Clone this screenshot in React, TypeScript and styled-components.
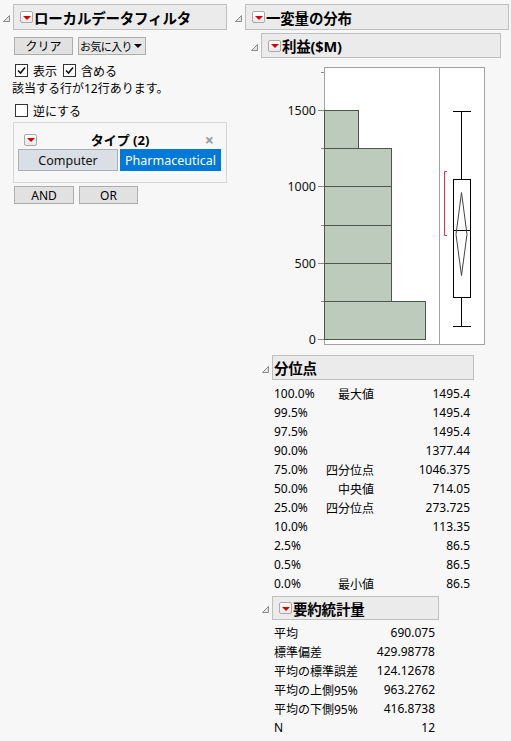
import styled, { createGlobalStyle } from "styled-components";

const GlobalStyle = createGlobalStyle`
  body {
    margin: 0;
    background: #f7f7f7;
    font-family: "Noto Sans", "Noto Sans CJK JP", sans-serif;
    font-size: 12px;
    color: #000;
  }
`;

const quantiles = [
  ["100.0%", "最大値", "1495.4"],
  ["99.5%", "", "1495.4"],
  ["97.5%", "", "1495.4"],
  ["90.0%", "", "1377.44"],
  ["75.0%", "四分位点", "1046.375"],
  ["50.0%", "中央値", "714.05"],
  ["25.0%", "四分位点", "273.725"],
  ["10.0%", "", "113.35"],
  ["2.5%", "", "86.5"],
  ["0.5%", "", "86.5"],
  ["0.0%", "最小値", "86.5"],
];

const summary = [
  ["平均", "690.075"],
  ["標準偏差", "429.98778"],
  ["平均の標準誤差", "124.12678"],
  ["平均の上側95%", "963.2762"],
  ["平均の下側95%", "416.8738"],
  ["N", "12"],
];

const bins = [
  { lo: 0, hi: 250, n: 3 },
  { lo: 250, hi: 500, n: 2 },
  { lo: 500, hi: 750, n: 2 },
  { lo: 750, hi: 1000, n: 2 },
  { lo: 1000, hi: 1250, n: 2 },
  { lo: 1250, hi: 1500, n: 1 },
];

// value -> y inside the chart svg
const yOf = (v: number) => Math.round(279 - (v * 229) / 1500) + 0.5;

function Disclosure() {
  return (
    <Tri viewBox="0 0 7 7" width={7} height={7}>
      <path d="M6.5 0.5 V6.5 H0.5 Z" fill="#e4e4e4" stroke="#8c8c8c" />
    </Tri>
  );
}

function Check({ checked }: { checked?: boolean }) {
  return (
    <CheckBox>
      {checked && (
        <svg viewBox="0 0 11 11" width={11} height={11}>
          <path d="M2 5.5 L4.5 8 L9 2.5" fill="none" stroke="#111" strokeWidth={1.6} />
        </svg>
      )}
    </CheckBox>
  );
}

function Histogram() {
  const cx = 191.5;
  return (
    <ChartSvg width={220} height={290} viewBox="0 0 220 290">
      <rect x={54.5} y={7.5} width={160} height={277} fill="#fff" stroke="#a3a3a3" />
      <line x1={169.5} y1={7.5} x2={169.5} y2={284.5} stroke="#a3a3a3" />
      {[0, 500, 1000, 1500].map((v) => (
        <g key={v}>
          <line x1={48} y1={yOf(v)} x2={54} y2={yOf(v)} stroke="#8a8a8a" />
          <text x={46} y={yOf(v) + 4.5} textAnchor="end" fontSize={12.5} fill="#111">
            {v}
          </text>
        </g>
      ))}
      {[250, 750, 1250, 1750].map((v) => (
        <line key={v} x1={51} y1={yOf(v)} x2={54} y2={yOf(v)} stroke="#8a8a8a" />
      ))}
      {bins.map((b) => (
        <rect
          key={b.lo}
          x={54.5}
          y={yOf(b.hi)}
          width={Math.round(b.n * 33.5)}
          height={yOf(b.lo) - yOf(b.hi)}
          fill="#bccbbc"
          stroke="#4d554d"
        />
      ))}
      {/* shortest half bracket */}
      <path d="M177 111.5 H174.5 V175.5 H177" fill="none" stroke="#e0344c" />
      {/* box plot */}
      <line x1={cx} y1={yOf(1495.4)} x2={cx} y2={yOf(86.5)} stroke="#000" />
      <line x1={183} y1={yOf(1495.4)} x2={201} y2={yOf(1495.4)} stroke="#000" />
      <line x1={183} y1={yOf(86.5)} x2={201} y2={yOf(86.5)} stroke="#000" />
      <rect
        x={183.5}
        y={yOf(1046.375)}
        width={17}
        height={yOf(273.725) - yOf(1046.375)}
        fill="#fff"
        stroke="#000"
      />
      <line x1={183.5} y1={yOf(714.05)} x2={200.5} y2={yOf(714.05)} stroke="#000" />
      <path
        d={`M${cx} ${yOf(963.28)} L${cx + 5.5} ${yOf(690.075)} L${cx} ${yOf(416.87)} L${cx - 5.5} ${yOf(690.075)} Z`}
        fill="none"
        stroke="#444"
      />
    </ChartSvg>
  );
}

export default function App() {
  return (
    <>
      <GlobalStyle />
      <Page>
        <LeftColumn>
          <OutlineHead>
            <Disclosure />
            <HeaderBox $width={214} $height={26}>
              <MenuButton />
              <HeaderTitle>ローカルデータフィルタ</HeaderTitle>
            </HeaderBox>
          </OutlineHead>
          <FilterBody>
            <ButtonRow>
              <PushButton $width={59}>クリア</PushButton>
              <ComboButton>
                お気に入り
                <ComboArrow />
              </ComboButton>
            </ButtonRow>
            <CheckRow $top={9}>
              <Check checked />
              <span>表示</span>
              <Check checked />
              <span>含める</span>
            </CheckRow>
            <InfoText>該当する行が12行あります。</InfoText>
            <CheckRow $top={8}>
              <Check />
              <span>逆にする</span>
            </CheckRow>
            <FilterCard>
              <CardHead>
                <MenuButton />
                <CardTitle>タイプ (2)</CardTitle>
                <CloseMark>×</CloseMark>
              </CardHead>
              <Levels>
                <LevelButton $width={100}>Computer</LevelButton>
                <LevelButton $width={101} $selected>
                  Pharmaceutical
                </LevelButton>
              </Levels>
            </FilterCard>
            <ButtonRow $top={3}>
              <PushButton $width={60}>AND</PushButton>
              <PushButton $width={59}>OR</PushButton>
            </ButtonRow>
          </FilterBody>
        </LeftColumn>

        <RightColumn>
          <OutlineHead>
            <Disclosure />
            <HeaderBox $width={264} $height={26}>
              <MenuButton />
              <HeaderTitle>一変量の分布</HeaderTitle>
            </HeaderBox>
          </OutlineHead>
          <Nested $indent={16} $top={3}>
            <OutlineHead>
              <Disclosure />
              <HeaderBox $width={240} $height={25}>
                <MenuButton />
                <HeaderTitle>利益($M)</HeaderTitle>
              </HeaderBox>
            </OutlineHead>
            <Histogram />
            <Nested $indent={11} $top={5}>
              <OutlineHead>
                <Disclosure />
                <HeaderBox $width={202} $height={25} $plain>
                  <HeaderTitle>分位点</HeaderTitle>
                </HeaderBox>
              </OutlineHead>
              <QuantileTable>
                {quantiles.map(([p, label, value]) => (
                  <QuantileRow key={p}>
                    <span>{p}</span>
                    <RightCell>{label}</RightCell>
                    <RightCell>{value}</RightCell>
                  </QuantileRow>
                ))}
              </QuantileTable>
            </Nested>
            <Nested $indent={11} $top={3}>
              <OutlineHead>
                <Disclosure />
                <HeaderBox $width={167} $height={24}>
                  <MenuButton />
                  <HeaderTitle>要約統計量</HeaderTitle>
                </HeaderBox>
              </OutlineHead>
              <SummaryTable>
                {summary.map(([label, value]) => (
                  <SummaryRow key={label}>
                    <span>{label}</span>
                    <RightCell>{value}</RightCell>
                  </SummaryRow>
                ))}
              </SummaryTable>
            </Nested>
          </Nested>
        </RightColumn>
      </Page>
    </>
  );
}

const Page = styled.div`
  display: flex;
  align-items: flex-start;
  padding-top: 4px;
`;

const LeftColumn = styled.div`
  display: flex;
  flex-direction: column;
  margin-left: 3px;
  width: 224px;
`;

const RightColumn = styled.div`
  display: flex;
  flex-direction: column;
  margin-left: 8px;
`;

const Nested = styled.div<{ $indent: number; $top: number }>`
  display: flex;
  flex-direction: column;
  margin-left: ${(p) => p.$indent}px;
  margin-top: ${(p) => p.$top}px;
`;

const OutlineHead = styled.div`
  display: flex;
  align-items: center;
  gap: 3px;
`;

const Tri = styled.svg`
  flex: none;
  margin-top: 3px;
`;

const HeaderBox = styled.div<{ $width: number; $height: number; $plain?: boolean }>`
  box-sizing: border-box;
  width: ${(p) => p.$width}px;
  height: ${(p) => p.$height}px;
  display: flex;
  align-items: center;
  gap: 1px;
  padding-left: ${(p) => (p.$plain ? 1 : 6)}px;
  background: #ebebeb;
  border: 1px solid #bfbfbf;
`;

const HeaderTitle = styled.span`
  font-size: 14.5px;
  font-weight: 700;
  letter-spacing: -0.2px;
  white-space: nowrap;
`;

const MenuButton = styled.span`
  flex: none;
  box-sizing: border-box;
  width: 13px;
  height: 12px;
  display: inline-flex;
  align-items: center;
  justify-content: center;
  border: 1px solid #a9a9a9;
  border-radius: 2px;
  background: linear-gradient(#ffffff, #e9e9e9);
  &::after {
    content: "";
    border-left: 4px solid transparent;
    border-right: 4px solid transparent;
    border-top: 4px solid #d80000;
    margin-top: 1px;
  }
`;

const FilterBody = styled.div`
  display: flex;
  flex-direction: column;
  align-items: flex-start;
  padding-left: 10px;
`;

const ButtonRow = styled.div<{ $top?: number }>`
  display: flex;
  gap: 5px;
  margin-top: ${(p) => p.$top ?? 7}px;
  margin-left: 1px;
`;

const PushButton = styled.div<{ $width: number }>`
  box-sizing: border-box;
  width: ${(p) => p.$width}px;
  height: 18px;
  display: flex;
  align-items: center;
  justify-content: center;
  background: #e1e1e1;
  border: 1px solid #adadad;
  font-size: 12px;
`;

const ComboButton = styled.div`
  box-sizing: border-box;
  width: 68px;
  height: 18px;
  display: flex;
  align-items: center;
  justify-content: space-between;
  padding: 0 3px 0 1px;
  background: #e5e5e5;
  border: 1px solid #adadad;
  font-size: 11px;
  letter-spacing: -0.6px;
  white-space: nowrap;
`;

const ComboArrow = styled.span`
  border-left: 4px solid transparent;
  border-right: 4px solid transparent;
  border-top: 4px solid #000;
`;

const CheckRow = styled.div<{ $top: number }>`
  display: flex;
  align-items: center;
  gap: 5px;
  height: 13px;
  margin-top: ${(p) => p.$top}px;
  margin-left: 2px;
  font-size: 12px;
  span + div {
    margin-left: 1px;
  }
`;

const CheckBox = styled.div`
  box-sizing: border-box;
  width: 13px;
  height: 13px;
  display: flex;
  align-items: center;
  justify-content: center;
  background: #fff;
  border: 1px solid #333;
`;

const InfoText = styled.div`
  margin-top: 5px;
  margin-left: -1px;
  line-height: 14px;
  font-size: 12px;
  white-space: nowrap;
`;

const FilterCard = styled.div`
  box-sizing: border-box;
  width: 214px;
  margin-top: 5px;
  padding: 7px 4px 11px;
  border: 1px solid #d6d6d6;
`;

const CardHead = styled.div`
  display: grid;
  grid-template-columns: 24px 1fr 24px;
  align-items: center;
  height: 12px;
  ${MenuButton} {
    margin-left: 6px;
  }
`;

const CardTitle = styled.span`
  text-align: center;
  font-size: 13px;
  font-weight: 700;
`;

const CloseMark = styled.span`
  justify-self: end;
  margin-right: 8px;
  color: #9a9a9a;
  font-size: 16px;
  font-weight: 700;
  line-height: 12px;
`;

const Levels = styled.div`
  display: flex;
  gap: 2px;
  margin-top: 7px;
`;

const LevelButton = styled.div<{ $width: number; $selected?: boolean }>`
  box-sizing: border-box;
  width: ${(p) => p.$width}px;
  height: 22px;
  display: flex;
  align-items: center;
  justify-content: center;
  font-size: 12.5px;
  color: ${(p) => (p.$selected ? "#fff" : "#111")};
  background: ${(p) => (p.$selected ? "#0078d7" : "#d9dfe5")};
  border: 1px solid ${(p) => (p.$selected ? "#0078d7" : "#a9afb5")};
`;

const ChartSvg = styled.svg`
  display: block;
  margin-left: 19px;
  margin-top: 2px;
  font-family: "Noto Sans", sans-serif;
`;

const QuantileTable = styled.div`
  display: flex;
  flex-direction: column;
  margin-left: 12px;
  margin-top: 4px;
`;

const QuantileRow = styled.div`
  display: grid;
  grid-template-columns: 50px 50px 96px;
  height: 19px;
  align-items: center;
  font-size: 12px;
  white-space: nowrap;
`;

const RightCell = styled.span`
  text-align: right;
`;

const SummaryTable = styled.div`
  display: flex;
  flex-direction: column;
  margin-left: 12px;
  margin-top: 3px;
`;

const SummaryRow = styled.div`
  display: grid;
  grid-template-columns: 90px 71px;
  height: 19px;
  align-items: center;
  font-size: 12px;
  white-space: nowrap;
`;
